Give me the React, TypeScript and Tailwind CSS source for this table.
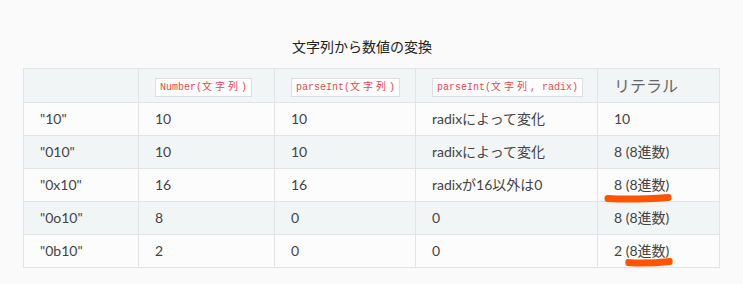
const Code = ({ pre, jp, post }: { pre: string; jp: string; post: string }) => (
  <code className="inline-block border border-[#dddddd] bg-white px-[4px] leading-[17px] text-[10px] text-[#e8474f] font-['Liberation_Mono','Noto_Sans_CJK_JP',monospace]">
    {pre}
    <span className="tracking-[3px]">{jp}</span>
    {post}
  </code>
);

const rows = [
  ['"10"', "10", "10", "radixによって変化", "10"],
  ['"010"', "10", "10", "radixによって変化", "8 (8進数)"],
  ['"0x10"', "16", "16", "radixが16以外は0", "8 (8進数)"],
  ['"0o10"', "8", "0", "0", "8 (8進数)"],
  ['"0b10"', "2", "0", "0", "2 (8進数)"],
];

function Underline({ className }: { className: string }) {
  return (
    <svg className={`absolute pointer-events-none ${className}`} viewBox="0 0 70 10" preserveAspectRatio="none">
      <path d="M4 5.5 C 20 6.5, 45 6, 66 4.5" stroke="#ff5500" strokeWidth="7" strokeLinecap="round" fill="none" />
    </svg>
  );
}

export default function App() {
  return (
    <div className="w-[743px] h-[284px] bg-[#fafafa] pt-[37px] font-['Lato','Noto_Sans_CJK_JP',sans-serif] text-[#444]">
      <div className="relative mx-[23px] w-[696px]">
        <p className="text-center pr-[18px] text-[14px] leading-[20px] text-[#222] mb-[11px]">文字列から数値の変換</p>
        <table className="w-[696px] table-fixed border-collapse text-[14px] border border-[#e1e4e6]">
          <colgroup>
            <col className="w-[115px]" />
            <col className="w-[136px]" />
            <col className="w-[141px]" />
            <col className="w-[182px]" />
            <col className="w-[122px]" />
          </colgroup>
          <thead>
            <tr className="bg-[#f2f5f6] h-[34px]">
              <th className="border border-[#e1e4e6]"></th>
              <th className="border border-[#e1e4e6] text-left font-normal pl-[16px]"><Code pre="Number(" jp="文字列" post=")" /></th>
              <th className="border border-[#e1e4e6] text-left font-normal pl-[16px]"><Code pre="parseInt(" jp="文字列" post=")" /></th>
              <th className="border border-[#e1e4e6] text-left font-normal pl-[16px]"><Code pre="parseInt(" jp="文字列" post=", radix)" /></th>
              <th className="border border-[#e1e4e6] text-left font-normal pl-[16px] text-[16px] text-[#666]">リテラル</th>
            </tr>
          </thead>
          <tbody>
            {rows.map((r, i) => (
              <tr key={i} className={`h-[33px] ${i % 2 === 1 ? "bg-[#f2f5f6]" : "bg-[#fcfcfc]"}`}>
                {r.map((c, j) => (
                  <td key={j} className="border border-[#e1e4e6] pl-[16px] leading-[20px]">{c}</td>
                ))}
              </tr>
            ))}
          </tbody>
        </table>
        <Underline className="left-[581px] top-[156px] w-[68px] h-[10px]" />
        <Underline className="left-[602px] top-[220px] w-[48px] h-[10px]" />
      </div>
    </div>
  );
}
